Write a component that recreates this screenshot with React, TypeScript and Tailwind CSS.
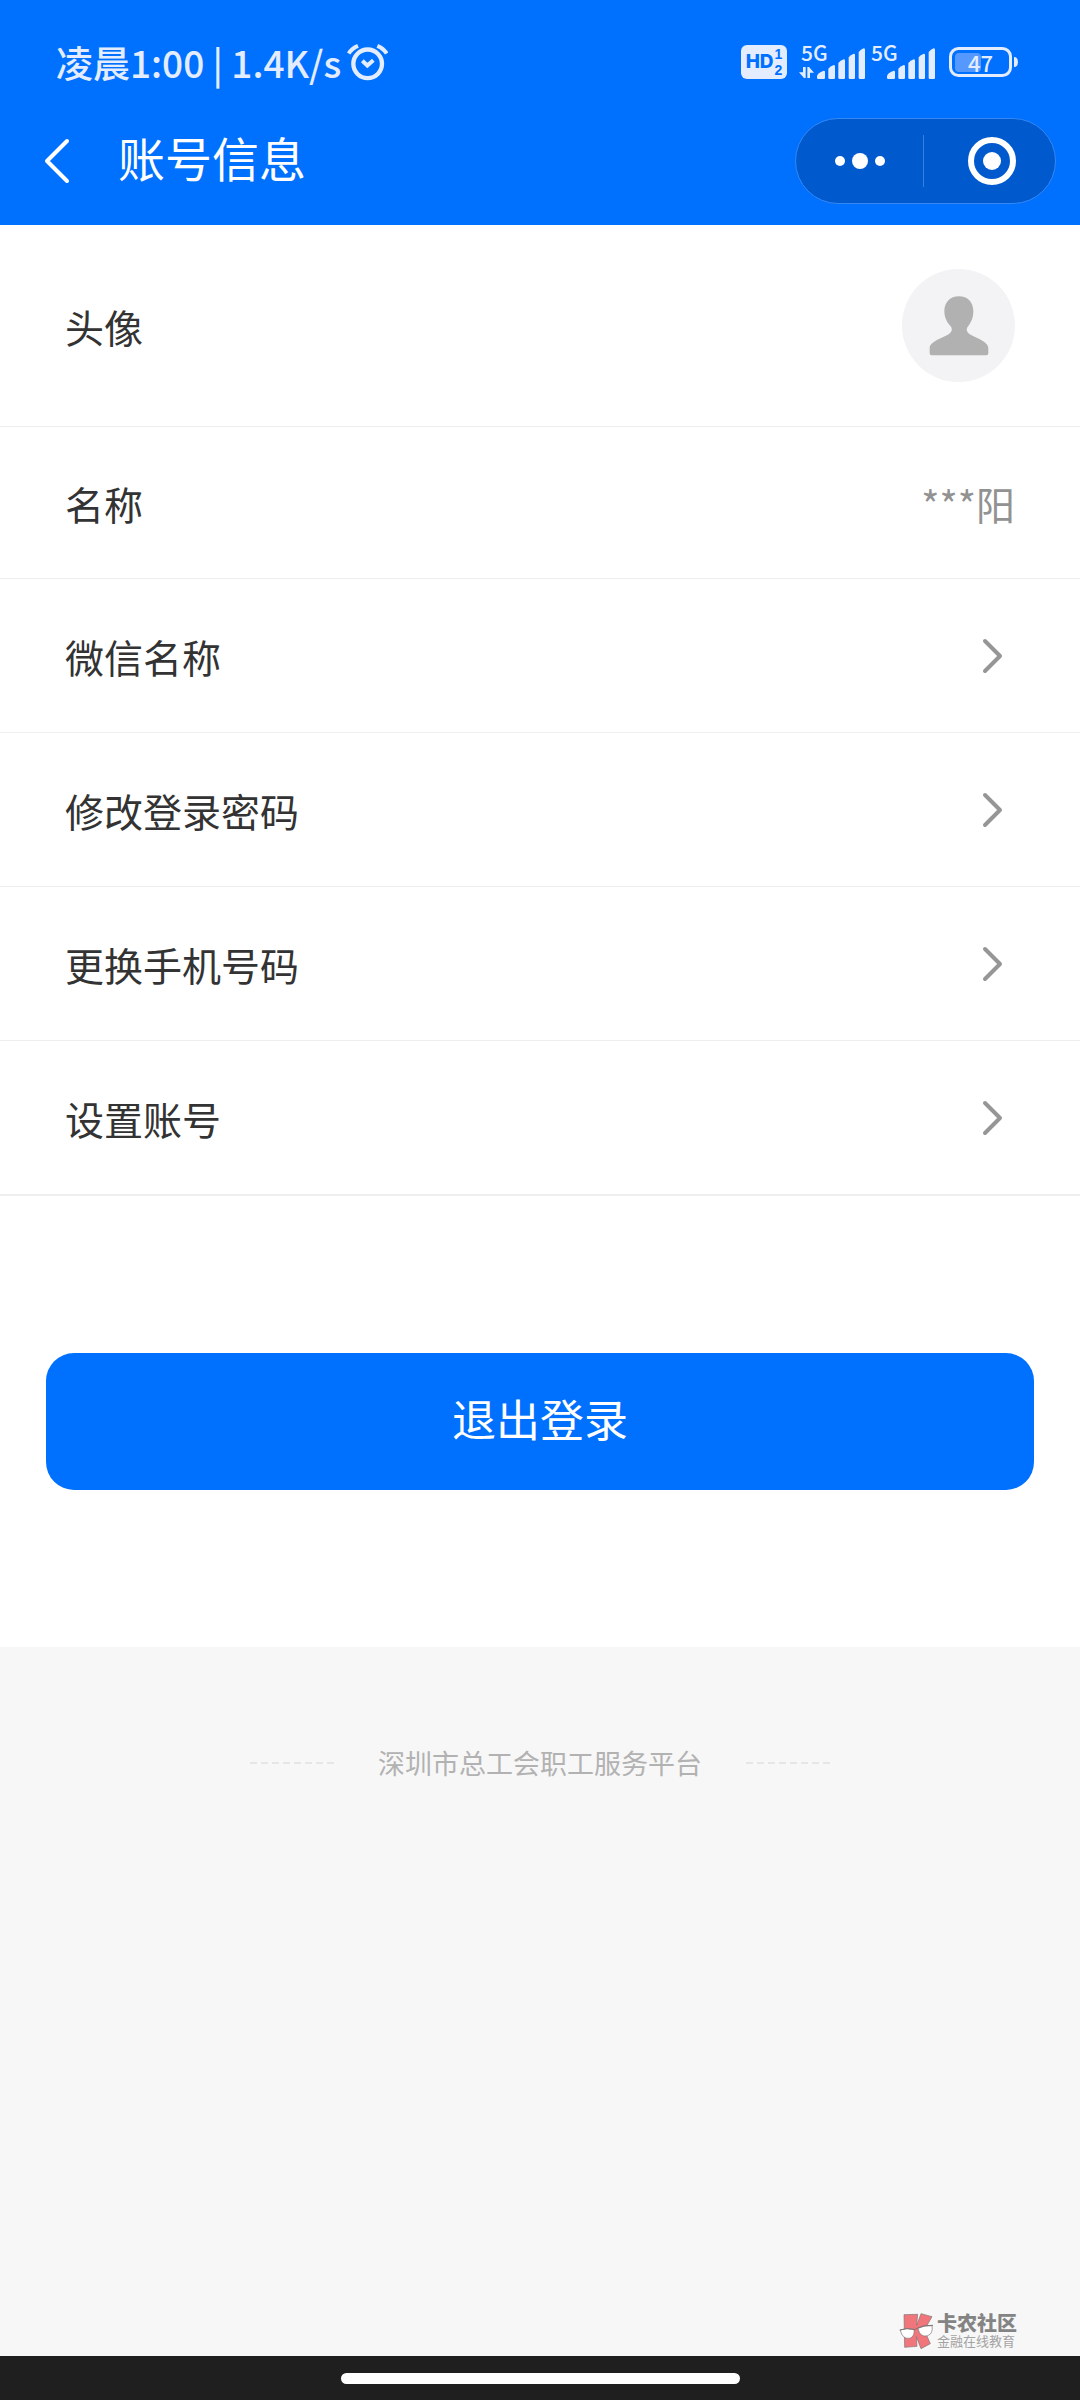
import { useState } from "react";

type Row = {
  id: string;
  label: string;
};

const links: Row[] = [
  { id: "wechat", label: "微信名称" },
  { id: "password", label: "修改登录密码" },
  { id: "phone", label: "更换手机号码" },
  { id: "account", label: "设置账号" },
];

function AlarmIcon() {
  return (
    <svg width="41" height="38" viewBox="1041 71 123 113" fill="none" stroke="#e3edff" aria-hidden="true">
      <circle cx="1103" cy="133" r="43" strokeWidth="13" />
      <path d="M1087 124l15 14 18-16" strokeWidth="12" />
      <path d="M1046 102q9-15 28-23M1132 79q19 8 28 23" strokeWidth="12" />
    </svg>
  );
}

function Signal({ active }: { active?: boolean }) {
  return (
    <div className="relative h-[35px] w-[66px]">
      <span className="absolute left-[2px] top-[-3px] text-[21px] font-medium leading-[21px]">5G</span>
      <svg width="66" height="35" viewBox="237 75 198 105" fill="#e3edff" aria-hidden="true">
        {active ? (
          <path d="M249 141h8v33h-5l-15-17h12zM262 174v-33h5l15 17h-12v16z" />
        ) : null}
        <path d="M291 169q1-10 20-17q4 0 4 4v17q0 4-4 4h-16q-4 0-4-4z" />
        <path d="M325 146q6-8 16-11q4 0 4 4v34q0 4-4 4h-12q-4 0-4-4z" />
        <path d="M355 129q6-8 16-11q4 0 4 4v51q0 4-4 4h-12q-4 0-4-4z" />
        <path d="M386 112q6-8 15-11q4 0 4 4v68q0 4-4 4h-11q-4 0-4-4z" />
        <path d="M416 96q6-8 15-11q4 0 4 4v84q0 4-4 4h-11q-4 0-4-4z" />
      </svg>
    </div>
  );
}

function Battery() {
  return (
    <div className="relative flex h-[31px] w-[70px] items-center">
      <svg className="absolute inset-0" width="70" height="31" viewBox="0 0 70 31" fill="none" aria-hidden="true">
        <rect x="6" y="6" width="26" height="19" rx="4" fill="#5599ff" />
        <rect x="1.5" y="1.5" width="60" height="27" rx="8" stroke="#e3edff" strokeWidth="3" />
        <path d="M65 10q4 0 4 5t-4 5z" fill="#e3edff" />
      </svg>
      <span className="relative w-[63px] text-center text-[22px] font-medium leading-[30px]">47</span>
    </div>
  );
}

function StatusBar() {
  return (
    <div className="flex h-[40px] items-center justify-between pl-[56px] pr-[61px] text-[#e3edff]">
      <div className="flex items-center gap-[6px]">
        <span className="whitespace-pre text-[37px] font-medium leading-[40px]">凌晨1:00 | 1.4K/s</span>
        <AlarmIcon />
      </div>
      <div className="flex items-center">
        <div className="mr-[12px] flex h-[34px] w-[46px] items-center justify-center gap-px rounded-[6px] bg-[#e3edff] font-['Inter',sans-serif] text-[#0070ff]">
          <span className="text-[19px] font-extrabold leading-[20px]">HD</span>
          <span className="flex flex-col font-['Liberation_Sans',sans-serif] text-[14px] font-bold leading-[16px]">
            <span>1</span>
            <span>2</span>
          </span>
        </div>
        <div className="mr-[14px] flex gap-[4px]">
          <Signal active />
          <Signal />
        </div>
        <Battery />
      </div>
    </div>
  );
}

function NavBar() {
  return (
    <div className="flex h-[86px] items-center pl-[40px] pr-[24px]">
      <button type="button" aria-label="返回" className="mr-[44px] flex h-[60px] w-[34px] items-center">
        <svg width="34" height="48" viewBox="0 0 34 48" fill="none" stroke="#fff" strokeWidth="4" strokeLinecap="round" strokeLinejoin="round">
          <path d="M27 4L7 24l20 20" />
        </svg>
      </button>
      <h1 className="flex-1 pb-2 text-[47px] leading-[60px] text-white">账号信息</h1>
      <div className="flex h-[86px] w-[261px] items-center rounded-full border border-[#3388f5] bg-[#005acd]">
        <button type="button" aria-label="更多" className="flex flex-1 items-center justify-center gap-[7px]">
          <span className="size-[10px] rounded-full bg-white" />
          <span className="size-[16px] rounded-full bg-white" />
          <span className="size-[10px] rounded-full bg-white" />
        </button>
        <span className="h-[52px] w-px bg-[#3380dc]" />
        <button type="button" aria-label="关闭" className="flex flex-1 items-center justify-center pl-1">
          <span className="flex size-[48px] items-center justify-center rounded-full border-[6px] border-white">
            <span className="size-[18px] rounded-full bg-white" />
          </span>
        </button>
      </div>
    </div>
  );
}

function Avatar() {
  return (
    <div className="flex size-[113px] items-center justify-center rounded-full bg-[#f3f3f5]">
      <svg width="60" height="60" viewBox="206 167 180 180" fill="#b1b1b1" aria-hidden="true">
        <path d="M296 168c26 0 43 17 43 45 0 24-10 38-18 48-4 8-1 15 6 20 20 12 57 22 57 43v15q0 6-6 6H214q-6 0-6-6v-15c0-21 39-31 58-43 7-5 11-12 7-20-9-11-21-24-21-48 0-28 18-45 44-45z" />
      </svg>
    </div>
  );
}

function Chevron() {
  return (
    <svg className="mr-[10px]" width="24" height="40" viewBox="0 0 24 40" fill="none" stroke="#969696" strokeWidth="4" strokeLinecap="round" strokeLinejoin="round" aria-hidden="true">
      <path d="M4 5l15 15L4 35" />
    </svg>
  );
}

function Watermark() {
  return (
    <div className="flex items-center gap-[3px] text-[#848484]">
      <svg width="35" height="36" viewBox="120 96 105 108" stroke="#7f7376" strokeWidth="2" aria-hidden="true">
        <path d="M135 101l41-1-3 33 13-35 33 9-23 40 18 41-28 15-14-36 2 29-37 3z" fill="#f0767c" />
        <path d="M124 147q17-7 41-2 3 20-12 27-24 3-29-25zM177 142q17-9 42-8 4 24-13 30-23 7-29-22z" fill="#fff" />
        <path d="M122 147q22-8 45-1l9-5q20-10 46-8" fill="none" strokeWidth="3" />
      </svg>
      <div className="flex flex-col">
        <span className="text-[20px] font-black leading-[20px]">卡农社区</span>
        <span className="text-[13px] leading-[16px] text-[#a3a3a3]">金融在线教育</span>
      </div>
    </div>
  );
}

function Dashes() {
  return (
    <span className="flex gap-[4px]" aria-hidden="true">
      {Array.from({ length: 8 }, (_, i) => (
        <span key={i} className="h-[2px] w-[7px] bg-[#e6e6e6]" />
      ))}
    </span>
  );
}

export default function App() {
  const [name] = useState("***阳");

  return (
    <div className="flex min-h-screen flex-col bg-[#f7f7f7] font-['Noto_Sans_CJK_SC',sans-serif]">
      <header className="flex flex-col gap-[36px] bg-[#0070ff] pb-[21px] pt-[42px]">
        <StatusBar />
        <NavBar />
      </header>

      <main className="bg-white pb-[157px]">
        <ul className="text-[39px] leading-[50px] text-[#333333]">
          <li className="flex h-[202px] items-center justify-between border-b border-[#eeeeee] px-[65px]">
            <span>头像</span>
            <Avatar />
          </li>
          <li className="flex h-[152px] items-center justify-between border-b border-[#eeeeee] px-[65px]">
            <span>名称</span>
            <span className="text-[#929292]">{name}</span>
          </li>
          {links.map((row) => (
            <li key={row.id} className="border-b border-[#eeeeee] last:border-b-2">
              <a href={`#${row.id}`} className="flex h-[153px] items-center justify-between px-[65px]">
                <span>{row.label}</span>
                <Chevron />
              </a>
            </li>
          ))}
        </ul>
        <div className="px-[46px] pt-[157px]">
          <button type="button" className="h-[137px] w-full rounded-[28px] bg-[#0070ff] pb-2 text-[44px] leading-[60px] text-white">
            退出登录
          </button>
        </div>
      </main>

      <footer className="flex flex-1 flex-col items-center justify-between pt-[96px]">
        <div className="flex items-center gap-[44px] text-[27px] leading-[40px] text-[#b2b2b2]">
          <Dashes />
          <span>深圳市总工会职工服务平台</span>
          <Dashes />
        </div>
        <div className="self-end pb-[7px] pr-[63px]">
          <Watermark />
        </div>
      </footer>

      <div className="flex h-[44px] justify-center bg-[#1f1f1f] pt-[17px]">
        <span className="h-[11px] w-[399px] rounded-full bg-white" />
      </div>
    </div>
  );
}
